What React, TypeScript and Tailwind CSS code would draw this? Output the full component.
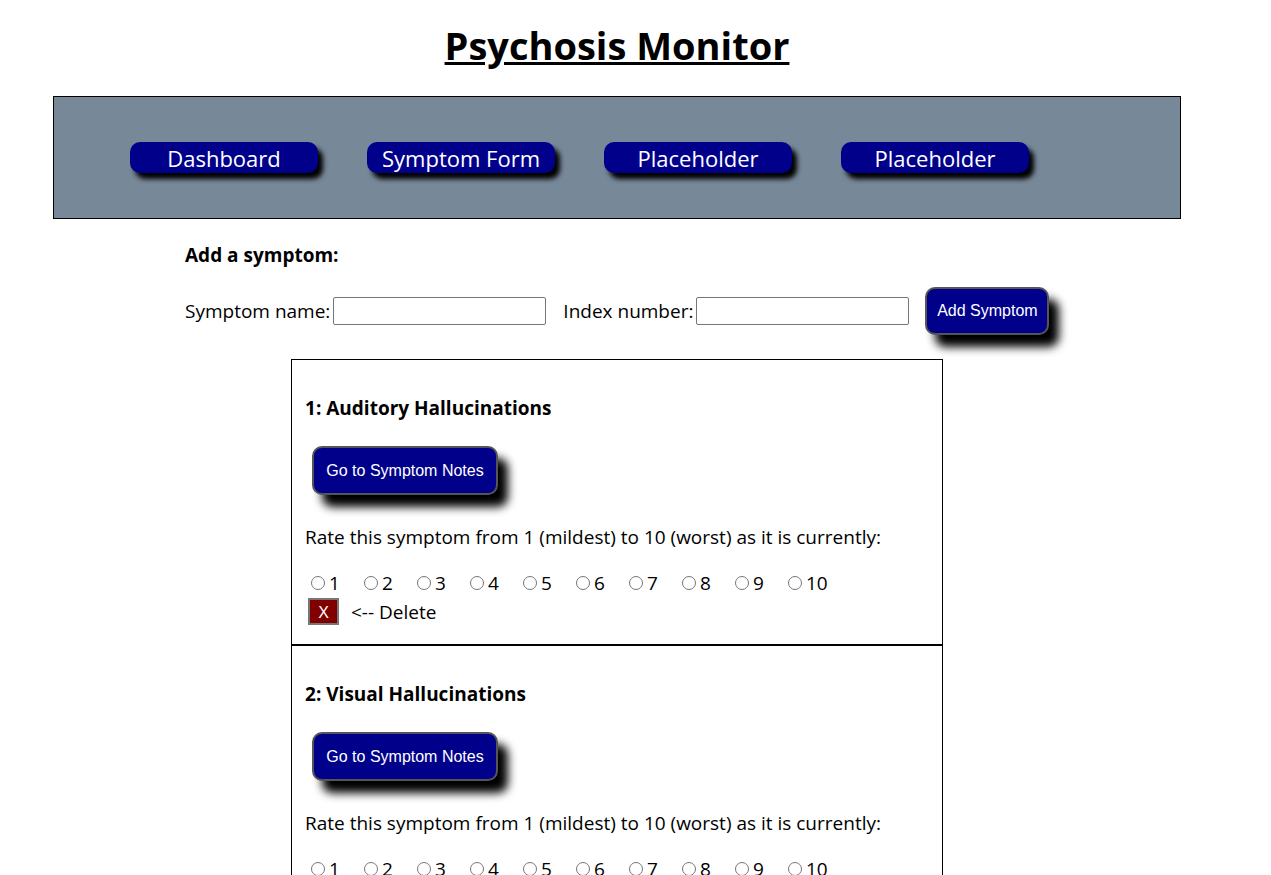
import { useState } from "react";

const navItems = ["Dashboard", "Symptom Form", "Placeholder", "Placeholder"];

const symptoms = [
  { id: 1, name: "Auditory Hallucinations" },
  { id: 2, name: "Visual Hallucinations" },
];

function SymptomItem({ id, name }: { id: number; name: string }) {
  const [rating, setRating] = useState<number | null>(null);
  return (
    <div className="border border-black px-[13px] pt-[35px] pb-[19px]">
      <h3 className="text-[19px] font-bold leading-[26px]">
        {id}: {name}
      </h3>
      <button className="mt-[25px] ml-[7px] w-[186px] h-[49px] rounded-[10px] border-2 border-[#555] bg-[#00008b] text-white text-[16px] font-['Liberation_Sans',Arial,sans-serif] shadow-[10px_12px_10px_#000]">
        Go to Symptom Notes
      </button>
      <p className="mt-[29px] text-[19px] leading-[26px]">
        Rate this symptom from 1 (mildest) to 10 (worst) as it is currently:
      </p>
      <div className="mt-[20px] flex text-[19px] leading-[26px]">
        {Array.from({ length: 10 }, (_, i) => i + 1).map((n) => (
          <label key={n} className="w-[53px] flex items-center">
            <input
              type="radio"
              name={`rating-${id}`}
              checked={rating === n}
              onChange={() => setRating(n)}
              className="ml-[6px] mr-[4px] w-[14px] h-[14px]"
            />
            {n}
          </label>
        ))}
      </div>
      <div className="flex items-center leading-[26px] text-[19px] mt-[2px]">
        <button className="ml-[3px] w-[31px] h-[27px] bg-[#800000] text-white border-2 border-[#777] text-[16px] font-['Liberation_Sans',Arial,sans-serif]">
          X
        </button>
        <span className="ml-[12px]">&lt;-- Delete</span>
      </div>
    </div>
  );
}

export default function App() {
  return (
    <div className="w-[1234px] font-['Open_Sans','Noto_Sans',sans-serif] text-black bg-white">
      <h1 className="text-center text-[38px] font-bold underline leading-[54px] pt-[18px] pb-[24px]">
        Psychosis Monitor
      </h1>
      <nav className="ml-[53px] w-[1128px] h-[123px] border border-black bg-[#778899] flex items-center pl-[76px] gap-[49px]">
        {navItems.map((item, i) => (
          <button
            key={i}
            className="w-[188px] h-[31px] rounded-[10px] bg-[#00008b] text-white text-[22px] leading-[33px] shadow-[5px_6px_5px_#000]"
          >
            {item}
          </button>
        ))}
      </nav>
      <div className="pl-[185px] pt-[23px]">
        <h2 className="text-[19px] font-bold leading-[26px]">Add a symptom:</h2>
        <div className="flex items-center mt-[19px] text-[19px] leading-[26px]">
          <label>Symptom name:</label>
          <input
            type="text"
            className="ml-[3px] w-[213px] h-[28px] border border-[#767676] rounded-[2px]"
          />
          <label className="ml-[17px]">Index number:</label>
          <input
            type="text"
            className="ml-[3px] w-[213px] h-[28px] border border-[#767676] rounded-[2px]"
          />
          <button className="ml-[16px] w-[124px] h-[48px] rounded-[10px] border-2 border-[#555] bg-[#00008b] text-white text-[16px] font-['Liberation_Sans',Arial,sans-serif] shadow-[10px_12px_10px_#000]">
            Add Symptom
          </button>
        </div>
      </div>
      <div className="ml-[291px] w-[652px] mt-[24px]">
        {symptoms.map((s) => (
          <SymptomItem key={s.id} id={s.id} name={s.name} />
        ))}
      </div>
    </div>
  );
}
